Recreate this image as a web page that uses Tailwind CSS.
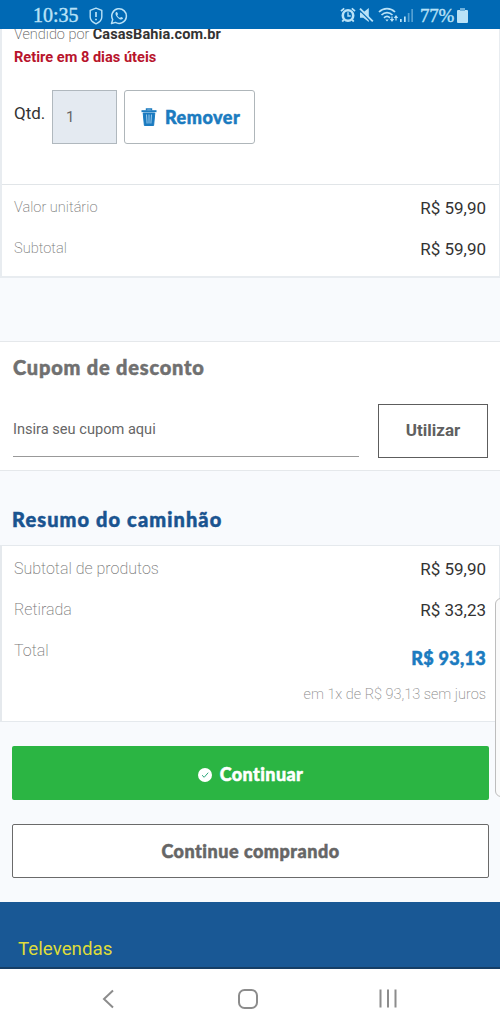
<!DOCTYPE html>
<html lang="pt-BR">
<head>
<meta charset="utf-8">
<meta name="viewport" content="width=device-width, initial-scale=1">
<title>Carrinho</title>
<script src="https://cdn.jsdelivr.net/npm/@tailwindcss/browser@4"></script>
</head>
<body class="bg-[#f8fafd] font-['Roboto',sans-serif] text-[#333] overflow-hidden">
<div class="relative flex flex-col w-[500px] h-[1028px] overflow-hidden whitespace-nowrap [font-variant-ligatures:none]">
  <header class="relative z-10 h-[29px] shrink-0 bg-[#0069b4] flex items-center pl-[33px] pr-8 text-[#b9e2f7] font-['Liberation_Serif',serif]">
    <span class="text-[20px] leading-[29px] h-[29px] pt-px [-webkit-text-stroke:0.4px]">10:35</span>
    <svg class="ml-[9px] mt-[2px]" width="16" height="18" viewBox="0 0 16 18" fill="none" stroke="currentColor" stroke-width="1.4"><path d="M8 1.2 13.8 3.4V10c0 3-2.5 5.3-5.8 6.8C4.700 15.300 2.200 13 2.200 10V3.400Z" stroke-linejoin="round"/><path d="M8 5v5M8 11.700v1.600" stroke-width="1.700"/></svg>
    <svg class="ml-[6px] mt-[2px]" width="18" height="18" viewBox="0 0 18 18" fill="none" stroke="currentColor" stroke-width="1.500"><path d="M1.500 16.500 2.700 12.600A7.300 7.300 0 1 1 5.500 15.400Z" stroke-linejoin="round"/><path d="M6.200 5c-1.200.9-.9 2.900.8 4.900 1.900 2.200 4.300 3.300 5.500 2.200.7-.7.6-1.100.2-1.400l-1.500-.8c-.7-.1-.8 1-1.400.9C8.700 10.400 7.500 9 7.300 8.400c0-.5.800-.8.700-1.300l-.7-1.700C7.100 5 6.700 4.800 6.200 5Z" fill="currentColor" stroke="none"/></svg>
    <svg class="ml-auto mr-[1px]" width="16" height="16" viewBox="0 0 16 16" fill="none" stroke="currentColor"><circle cx="8" cy="8.500" r="5.200" stroke-width="2.600"/><path d="M1 4.200 4.200 1.300M15 4.200 11.800 1.300M3.700 12.700 2.300 14.600M12.300 12.700l1.400 1.900" stroke-width="1.800"/><path d="M8 5.300V9h2.700" stroke-width="1.400"/></svg>
    <svg class="ml-[2px]" width="15" height="16" viewBox="0 0 15 16"><path d="M1 5.500h3.200L9.800 1v14L4.200 10.700H1Z" fill="currentColor"/><path d="M.8 3.200 13.200 15.600" stroke="#0069b4" stroke-width="1.600"/><path d="M1 1.600 13.800 14.400" stroke="currentColor" stroke-width="1.900"/></svg>
    <svg class="ml-[4px]" width="21" height="16" viewBox="0 0 21 16" fill="none" stroke="currentColor" stroke-width="1.700"><path d="M1 5C5.500.6 12.500.6 17 5M3.500 8c3.200-3.100 7.800-3.100 11 0M6 10.800c1.800-1.700 4.200-1.700 6 0"/><path d="M7.300 12.500h3.400L9 14.500Z" fill="currentColor" stroke="none"/><path d="M14 9.500v4M18 13.500v-4" stroke-width="1.200"/><path d="m11.800 12 2.200 3 2.200-3ZM15.800 11 18 8l2.200 3Z" fill="currentColor" stroke="none"/></svg>
    <svg class="ml-px mt-px" width="14" height="16" viewBox="0 0 14 16" fill="currentColor"><path d="M0 12h1.700v3H0ZM4 9.500h1.700V15H4Z"/><path d="M7.800 6h1.700v9H7.800ZM11.300 2H13v13h-1.700Z" opacity=".45"/></svg>
    <span class="ml-[6px] text-[19px] leading-[29px] h-[29px] pt-px w-[34px] tracking-[-0.3px] [-webkit-text-stroke:0.4px]">77%</span>
    <svg class="ml-[3px] mt-[2px]" width="11" height="15" viewBox="0 0 11 15" fill="currentColor"><path d="M3 0h5v2h2q1 0 1 1v11q0 1-1 1H1q-1 0-1-1V3q0-1 1-1h2Z"/><path d="M3 0h5v3H3Z" fill="#0069b4" opacity=".4"/></svg>
  </header>

  <section class="h-[249px] shrink-0 bg-white border-l-2 border-r border-[#e8ecf0] border-b-2 flex flex-col">
    <div class="h-[156px] shrink-0 border-b border-b-[#e1e5e8] pl-3">
      <p class="-mt-[5px] h-[21px] leading-[21px] text-[14.500px] font-extralight text-[#555]"><span>Vendido por</span> <b class="font-bold text-[#333] tracking-[0.08px]">CasasBahia.com.br</b></p>
      <p class="mt-[2px] h-[21px] leading-[21px] text-[14.600px] font-bold text-[#b8142c]">Retire em 8 dias úteis</p>
      <div class="flex mt-[22px] h-[54px]">
        <label class="w-[38px] pt-[11px] leading-[24px] text-[17px]">Qtd.</label>
        <div class="w-[65px] h-[54px] border-[1.500px] border-[#b0b8be] bg-[#e4eaf1] pl-[13px] leading-[52px] text-[15px] text-[#666]">1</div>
        <button class="ml-[7px] w-[131px] h-[54px] rounded-[3px] border-[1.500px] border-[#afb6ba] bg-white flex items-center pl-4 text-[#1b7bc0]">
          <svg width="16" height="18" viewBox="0 0 16 18" fill="none" stroke="currentColor"><path d="M.5 3.200h15" stroke-width="2"/><path d="M5.500 2.500V1h5v1.500" stroke-width="1.400"/><path d="M2.200 5h11.600l-1.200 12.500H3.400Z" fill="currentColor"/><path d="m5.500 6.500.6 9M8 6.500v9M10.500 6.500l-.6 9" stroke="#a9d2f0" stroke-width=".9"/></svg>
          <span class="ml-2 font-['Lato',sans-serif] font-black text-[18px] tracking-[0.5px] [-webkit-text-stroke:0.5px]">Remover</span>
        </button>
      </div>
    </div>
    <dl class="pl-3 pr-[13px] pt-[2px]">
      <div class="flex justify-between h-[41px]"><dt class="leading-[40px] text-[14.600px] font-extralight text-[#777]">Valor unitário</dt><dd class="leading-[43px] text-[17px]">R$ 59,90</dd></div>
      <div class="flex justify-between h-[41px]"><dt class="leading-[40px] text-[14.600px] font-extralight text-[#777]">Subtotal</dt><dd class="leading-[43px] text-[17px]">R$ 59,90</dd></div>
    </dl>
  </section>

  <section class="mt-[63px] h-[130px] shrink-0 bg-white border-y border-[#e5e8eb] px-[13px]">
    <h2 class="pt-[10px] h-[62px] leading-[30px] font-['Lato',sans-serif] font-black text-[20px] tracking-[0.8px] [-webkit-text-stroke:0.5px] text-[#707070]">Cupom de desconto</h2>
    <div class="flex justify-between">
      <div class="w-[346px] h-[53px] border-b border-[#999] leading-[51px] text-[14.600px] text-[#666]">Insira seu cupom aqui</div>
      <button class="w-[110px] h-[54px] border-[1.500px] border-[#5d5d5d] text-[17px] font-bold text-[#606060] mr-[-1px]">Utilizar</button>
    </div>
  </section>

  <h2 class="h-[74px] shrink-0 pl-3 pt-[33px] leading-[30px] font-['Lato',sans-serif] font-black text-[20px] tracking-[1.100px] [-webkit-text-stroke:0.5px] text-[#1a5490]">Resumo do caminhão</h2>

  <section class="h-[177px] shrink-0 bg-white border-l-2 border-r border-y border-[#e5e9ed] pl-3 pr-[13px]">
    <div class="flex justify-between h-[41px] pt-[3px]"><span class="leading-[40px] text-[16px] font-extralight text-[#777]">Subtotal de produtos</span><span class="leading-[41px] text-[17px]">R$ 59,90</span></div>
    <div class="flex justify-between h-[41px] pt-[3px]"><span class="leading-[40px] text-[16px] font-extralight text-[#777]">Retirada</span><span class="leading-[41px] text-[17px]">R$ 33,23</span></div>
    <div class="flex justify-between h-[47px] pt-[3px]"><span class="leading-[40px] text-[16px] font-extralight text-[#777]">Total</span><span class="leading-[55px] font-['Lato',sans-serif] font-black text-[18px] tracking-[0.3px] [-webkit-text-stroke:0.5px] text-[#1b7bc0]">R$ 93,13</span></div>
    <p class="text-right leading-[40px] text-[14.500px] font-extralight text-[#888]">em 1x de R$ 93,13 sem juros</p>
  </section>

  <div class="mt-6 px-3 flex flex-col gap-6 shrink-0">
    <button class="h-[54px] w-[477px] rounded-[2px] bg-[#2bb543] flex items-center justify-center gap-2 text-white pt-[3px]">
      <svg width="14" height="14" viewBox="0 0 14 14"><circle cx="7" cy="7" r="7" fill="currentColor"/><path d="m4 7.200 2.200 2.100L10.200 4.700" fill="none" stroke="#2ba77c" stroke-width="1"/></svg>
      <span class="font-['Lato',sans-serif] font-black text-[18px] tracking-[0.400px] [-webkit-text-stroke:0.5px]">Continuar</span>
    </button>
    <button class="h-[54px] w-[477px] rounded-[2px] border-[1.500px] border-[#6a6a6a] bg-white font-['Lato',sans-serif] font-black text-[18px] tracking-[0.500px] [-webkit-text-stroke:0.5px] text-[#666]">Continue comprando</button>
  </div>

  <footer class="mt-6 h-[67px] shrink-0 bg-[#195895] border-b-2 border-[#153e66] pl-[18px] leading-[95px] text-[18.800px] text-[#dfdc3a]">Televendas</footer>
  <nav class="flex-1 bg-white flex items-center text-[#8c8c8c]">
    <svg class="ml-[101px]" width="14" height="20" viewBox="0 0 14 20" fill="none" stroke="currentColor" stroke-width="2"><path d="M12 1.500 3 10l9 8.500"/></svg>
    <svg class="ml-[123px]" width="20" height="20" viewBox="0 0 20 20" fill="none" stroke="currentColor" stroke-width="2"><rect x="1" y="1" width="18" height="18" rx="5.500"/></svg>
    <svg class="ml-[121px]" width="18" height="19" viewBox="0 0 18 19" stroke="currentColor" stroke-width="2"><path d="M1.500 .5v18M9 .5v18M16.500 .5v18"/></svg>
  </nav>

  <div class="absolute left-[495px] top-[598px] w-4 h-[199px] rounded-[6px] border border-[#bdbdbd] bg-[#fafafa]"></div>
</div>
</body>
</html>
